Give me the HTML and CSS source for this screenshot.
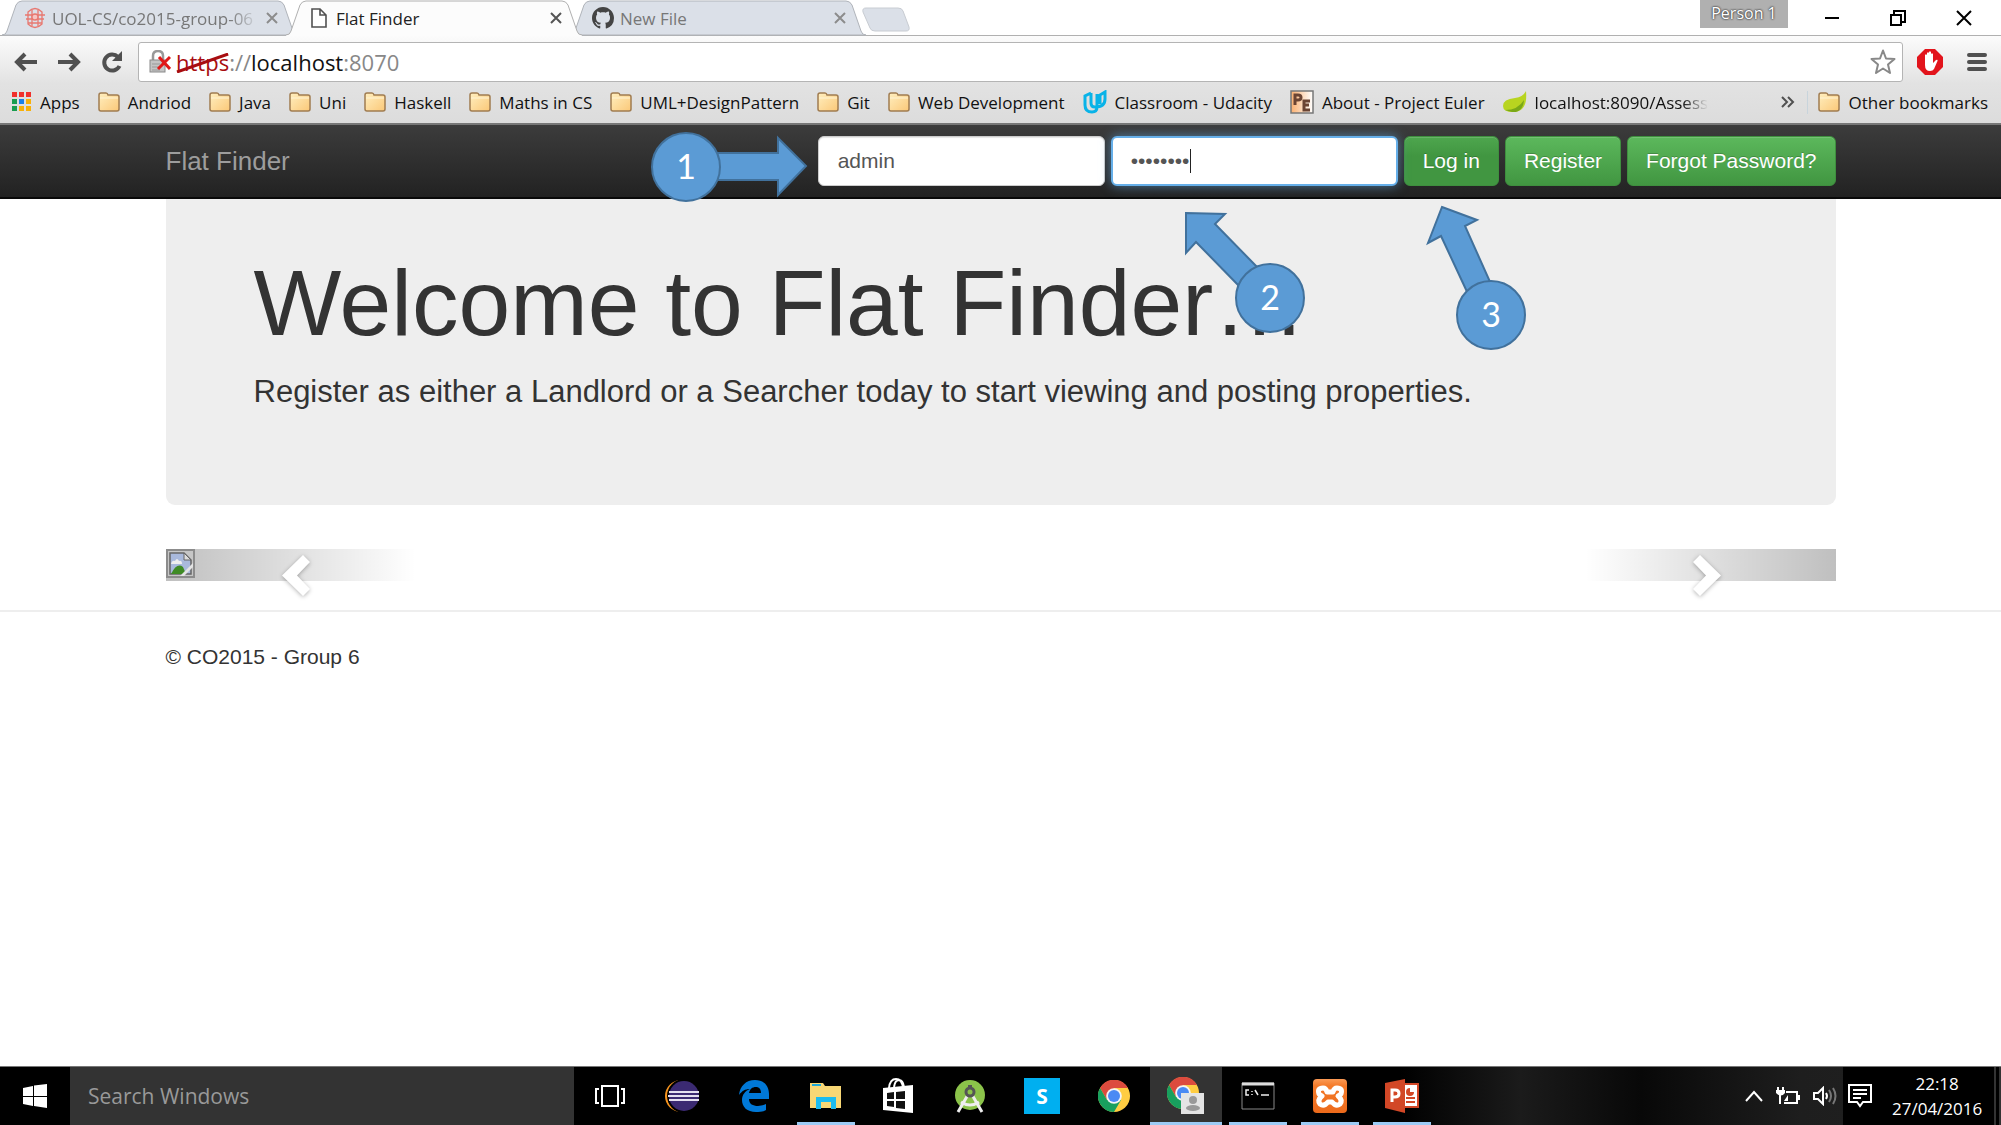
FILE: index.html
```html
<!DOCTYPE html>
<html lang="en">
<head>
<meta charset="utf-8">
<title>Flat Finder</title>
<link rel="stylesheet" href="styles.css">
</head>
<body>
<svg class="defs" aria-hidden="true">
  <defs>
    <linearGradient id="folder-fill" x1="0" y1="0" x2="1" y2="1"><stop offset="0" stop-color="#ffefc0"/><stop offset="1" stop-color="#fbc878"/></linearGradient>
    <linearGradient id="pe-fill" x1="0" y1="0" x2="1" y2="0"><stop offset="0" stop-color="#fbb070"/><stop offset="1" stop-color="#fff"/></linearGradient>
    <linearGradient id="xampp-fill" x1="0" y1="0" x2="0" y2="1"><stop offset="0" stop-color="#fb9a55"/><stop offset=".2" stop-color="#f47b2a"/><stop offset="1" stop-color="#ec6a1b"/></linearGradient>
    <symbol id="folder" viewBox="0 0 22 20"><path d="M1 5V3q0-2 2-2h5q1.500 0 2 2h9q2 0 2 2v12q0 2-2 2H3q-2 0-2-2z" fill="url(#folder-fill)" stroke="#a07c50" stroke-width="1.500"/><path d="M2 6h18" stroke="#fff4d4"/></symbol>
    <symbol id="chrome-logo" viewBox="0 0 32 32"><circle cx="16" cy="16" r="16" fill="#ffcd42"/><path d="M2.100 8A16 16 0 0 1 30 8H16l-7 12z" fill="#dc4b3e"/><path d="M2.100 8A16 16 0 0 0 16 32l7-12-14 0z" fill="#18a05e"/><circle cx="16" cy="16" r="7.800" fill="#f4f4f4"/><circle cx="16" cy="16" r="6" fill="#4a8af4"/></symbol>
    <symbol id="tab-close" viewBox="0 0 12 12"><path d="M1 1l10 10M11 1L1 11" stroke="currentColor" stroke-width="2" fill="none"/></symbol>
  </defs>
</svg>

<header class="browser">
  <div class="tabstrip">
    <div class="tab">
      <svg class="tab-shape" viewBox="0 0 296 36"><path d="M0 35Q4 35 5 31L14 5q2-4 6-4h256q4 0 6 4l9 26q1 4 5 4z" fill="#dbe0e8" stroke="#b0b4ba"/></svg>
      <svg class="favicon" viewBox="0 0 20 22"><g fill="none" stroke="#e87870" stroke-width="1.300"><path d="M3 5q7-7 14 0v12q-7 7-14 0z"/><path d="M0 8h20M1 12h18M3 16h14M7 3v16M13 3v16"/><circle cx="10" cy="10" r="3" fill="#f6c5c3"/></g></svg>
      <span class="tab-title fade">UOL-CS/co2015-group-06</span>
      <button class="tab-x" aria-label="Close tab"><svg width="12" height="12"><use href="#tab-close"/></svg></button>
    </div>
    <div class="tab active">
      <svg class="tab-shape" viewBox="0 0 296 36"><path d="M0 36v-1Q4 35 5 31L14 5q2-4 6-4h256q4 0 6 4l9 26q1 4 5 4v1z" fill="#fcfcfc"/><path d="M0 35Q4 35 5 31L14 5q2-4 6-4h256q4 0 6 4l9 26q1 4 5 4" fill="none" stroke="#b0b0b0"/></svg>
      <svg class="favicon" viewBox="0 0 20 22"><path d="M3 2h8l6 6v12H3zM11 2v6h6" fill="#fff" stroke="#505050" stroke-width="1.600"/></svg>
      <span class="tab-title">Flat Finder</span>
      <button class="tab-x" aria-label="Close tab"><svg width="12" height="12"><use href="#tab-close"/></svg></button>
    </div>
    <div class="tab">
      <svg class="tab-shape" viewBox="0 0 296 36"><path d="M0 35Q4 35 5 31L14 5q2-4 6-4h256q4 0 6 4l9 26q1 4 5 4z" fill="#dbe0e8" stroke="#b0b4ba"/></svg>
      <svg class="favicon" viewBox="0 0 16 16"><path fill="#444" d="M8 0C3.580 0 0 3.580 0 8c0 3.540 2.290 6.530 5.470 7.590.4.070.55-.17.55-.38 0-.19-.01-.82-.01-1.490-2.010.37-2.530-.49-2.690-.94-.09-.23-.48-.94-.82-1.130-.28-.15-.68-.52-.01-.53.63-.01 1.080.58 1.230.82.72 1.210 1.870.87 2.330.66.070-.52.28-.87.51-1.070-1.780-.2-3.640-.89-3.640-3.950 0-.87.31-1.590.82-2.150-.08-.2-.36-1.020.08-2.120 0 0 .67-.21 2.200.82.64-.18 1.320-.27 2-.27s1.360.09 2 .27c1.530-1.040 2.200-.82 2.200-.82.44 1.100.16 1.920.08 2.120.51.56.82 1.270.82 2.150 0 3.070-1.870 3.750-3.650 3.950.29.25.54.73.54 1.480 0 1.070-.01 1.930-.01 2.200 0 .21.15.46.55.38A8.010 8.010 0 0 0 16 8c0-4.420-3.580-8-8-8z"/></svg>
      <span class="tab-title">New File</span>
      <button class="tab-x" aria-label="Close tab"><svg width="12" height="12"><use href="#tab-close"/></svg></button>
    </div>
    <button class="new-tab" aria-label="New tab"><svg width="48" height="26" viewBox="0 0 48 26"><path d="M1 5q-1-4 3-4h32q4 0 5 3l6 16q1 4-3 4H13q-4 0-5-3z" fill="#dbe0e8" stroke="#c8ccd2"/></svg></button>
    <div class="window-controls">
      <span class="person">Person 1</span>
      <button aria-label="Minimise"><svg width="16" height="16"><path d="M1 8h14" stroke="#000" stroke-width="2"/></svg></button>
      <button aria-label="Restore"><svg width="16" height="16"><path d="M1 5h10v10H1zM4 5V1h11v11h-4" fill="none" stroke="#000" stroke-width="2"/></svg></button>
      <button aria-label="Close"><svg width="16" height="16"><path d="M1 1l14 14M15 1L1 15" stroke="#000" stroke-width="2"/></svg></button>
    </div>
  </div>

  <div class="toolbar">
    <button aria-label="Back"><svg width="24" height="20"><path d="M23 10H4M11 2l-8 8 8 8" fill="none" stroke="#505050" stroke-width="4"/></svg></button>
    <button aria-label="Forward"><svg width="24" height="20"><path d="M1 10h19M13 2l8 8-8 8" fill="none" stroke="#505050" stroke-width="4"/></svg></button>
    <button aria-label="Reload"><svg width="24" height="24"><path d="M18 7a8 8 0 1 0 1.500 9" fill="none" stroke="#505050" stroke-width="4"/><path d="M22 1v10H12z" fill="#505050"/></svg></button>
    <div class="omnibox">
      <svg width="22" height="24" viewBox="0 0 22 24"><path d="M4 12V6q0-5 5-5t5 5v6" fill="none" stroke="#999" stroke-width="2.500"/><rect x="1" y="10" width="15" height="12" fill="#c4c4c4" stroke="#8a8a8a"/><path d="M3 14h8M3 17h8M3 20h8" stroke="#999"/><path d="M10 7l11 12M21 7L9 19" stroke="#e01818" stroke-width="3"/></svg>
      <span class="url"><span class="scheme">https<svg class="strike" viewBox="0 0 54 20" preserveAspectRatio="none"><path d="M1 19L53 1" stroke="#a80d10" stroke-width="3"/></svg></span>://<b>localhost</b>:8070</span>
      <button class="star" aria-label="Bookmark this page"><svg width="26" height="26" viewBox="0 0 26 26"><path d="M13 1.500l3 8 8.500.5-6.500 5.500 2 8.500-7-4.500L6 24l2-8.500L1.500 10l8.500-.5z" fill="#fff" stroke="#888" stroke-width="2" stroke-linejoin="round"/></svg></button>
    </div>
    <button class="adblock" aria-label="AdBlock"><svg width="26" height="26" viewBox="0 0 26 26"><path d="M8 0h10l8 8v10l-8 8H8l-8-8V8z" fill="#e2141c"/><path d="M8 12V6q1-1.500 2 0v5V4q1-1.500 2 0v7V3q1-1.500 2 0v8V5q1-1.500 2 0v9l3-3q2-1 1.500 1L17 20q-1 2-4 2-5 0-5-6z" fill="#fff"/></svg></button>
    <button class="menu" aria-label="Menu"><svg width="20" height="20"><path d="M2 3h16M2 10h16M2 17h16" stroke="#505050" stroke-width="4" stroke-linecap="round"/></svg></button>
  </div>

  <nav class="bookmarks" aria-label="Bookmarks">
    <a href="#"><svg width="20" height="20"><path fill="#f0302c" d="M0 0h5v5H0zM7 0h5v5H7zM14 0h5v5h-5z"/><path fill="#189c50" d="M0 7h5v5H0zM0 14h5v5H0z"/><path fill="#1a80e8" d="M7 7h5v5H7z"/><path fill="#f8b008" d="M14 7h5v5h-5zM7 14h5v5H7zM14 14h5v5h-5z"/></svg>Apps</a>
    <a href="#"><svg width="22" height="20"><use href="#folder"/></svg>Andriod</a>
    <a href="#"><svg width="22" height="20"><use href="#folder"/></svg>Java</a>
    <a href="#"><svg width="22" height="20"><use href="#folder"/></svg>Uni</a>
    <a href="#"><svg width="22" height="20"><use href="#folder"/></svg>Haskell</a>
    <a href="#"><svg width="22" height="20"><use href="#folder"/></svg>Maths in CS</a>
    <a href="#"><svg width="22" height="20"><use href="#folder"/></svg>UML+DesignPattern</a>
    <a href="#"><svg width="22" height="20"><use href="#folder"/></svg>Git</a>
    <a href="#"><svg width="22" height="20"><use href="#folder"/></svg>Web Development</a>
    <a href="#"><svg width="24" height="24"><path d="M8 3L2 6v9q0 7 7 7 5 0 5-5V4M8 3v10q0 4 4 4 10 0 10-8V2l-5 3v9" fill="none" stroke="#09b3e8" stroke-width="3"/></svg>Classroom - Udacity</a>
    <a href="#"><svg width="24" height="24" viewBox="0 0 24 24"><rect x="1" y="1" width="22" height="22" fill="url(#pe-fill)" stroke="#777" stroke-width="1.500"/><path d="M5 15V5h3q3 0 3 2.500T8 10H5M20 11h-6v9h6M14 15h5" fill="none" stroke="#6b4433" stroke-width="3"/></svg>About - Project Euler</a>
    <a href="#"><svg width="24" height="24"><path d="M23 1q2 21-13 21-10 0-10-6 0-7 12-8 8-1 11-7z" fill="#b8d420"/><path d="M2 20q13 0 19-10-1 13-12 12z" fill="#7aa818"/></svg><span class="fade">localhost:8090/Assess</span></a>
    <button class="more" aria-label="More bookmarks"><svg width="14" height="12"><path d="M1 1l5 5-5 5M7 1l5 5-5 5" fill="none" stroke="#505050" stroke-width="2"/></svg></button>
    <a class="other" href="#"><svg width="22" height="20"><use href="#folder"/></svg>Other bookmarks</a>
  </nav>
</header>

<main class="page">
  <div class="navbar">
    <div class="container navbar-row">
      <a class="brand" href="#">Flat Finder</a>
      <form class="login">
        <input type="text" aria-label="Username" value="admin">
        <span class="password"><input class="focused" type="password" aria-label="Password" value="password"><i class="caret"></i></span>
        <button class="btn hover" type="button">Log in</button>
        <button class="btn" type="button">Register</button>
        <button class="btn" type="button">Forgot Password?</button>
      </form>
      <svg class="callouts" width="1200" height="240" viewBox="636 125 1200 240">
        <g fill="#5b9bd5" stroke="#41719c" stroke-width="2">
          <path d="M700 153h78v-15l28 28-28 29v-15h-78z"/>
          <path d="M1186 213l39 1-10 10 46 47-19 18-46-47-10 11z"/>
          <path d="M1442 207l35 13-12 6 26 58-22 12-28-60-13 7z"/>
          <circle cx="686" cy="167" r="34"/><circle cx="1270" cy="298" r="34"/><circle cx="1491" cy="315" r="34"/>
        </g>
        <g class="callout-text"><text x="686" y="179">1</text><text x="1270" y="310">2</text><text x="1491" y="327">3</text></g>
      </svg>
    </div>
  </div>
  <div class="container">
    <section class="jumbotron">
      <h1>Welcome to Flat Finder…</h1>
      <p>Register as either a Landlord or a Searcher today to start viewing and posting properties.</p>
    </section>
    <section class="carousel">
      <svg class="broken" width="29" height="29" viewBox="0 0 29 29"><path d="M1 1h27v27H1z" fill="#c6c6c6" stroke="#8c8c8c" stroke-width="2"/><path d="M4 4h14l7 7v14H4z" fill="#a9b9dc" stroke="#666" stroke-width="1.500"/><path d="M5 15q1-4 4-3 2-4 4 0 3-1 3 3z" fill="#eee"/><path d="M5 25q6-12 12-7l3 7z" fill="#3f8b25"/><path d="M18 4v7h7z" fill="#ddd" stroke="#666"/><path d="M14 27L27 14v4l-9 9z" fill="#e4e4e4"/></svg>
      <a class="control prev" href="#" aria-label="Previous"><svg width="30" height="44"><path d="M22 1l7 7-13 13.500L29 35l-7 7L1 21.500z" fill="#fff"/></svg></a>
      <a class="control next" href="#" aria-label="Next"><svg width="30" height="44"><path d="M8 1L1 8l13 13.500L1 35l7 7 21-20.500z" fill="#fff"/></svg></a>
    </section>
  </div>
  <footer><div class="container">© CO2015 - Group 6</div></footer>
</main>

<div class="taskbar">
  <button class="start" aria-label="Start"><svg width="24" height="24"><path d="M0 4l10-2v10H0zM11 1.500L24 0v12H11zM0 13h10v9L0 20zM11 13h13v11l-13-2z" fill="#fff"/></svg></button>
  <input class="search" type="text" placeholder="Search Windows" aria-label="Search Windows">
  <div class="apps">
    <button aria-label="Task view"><svg width="30" height="22"><path d="M7 1h16v20H7zM4 4H1v14h3M26 4h3v14h-3" fill="none" stroke="#fff" stroke-width="2"/></svg></button>
    <button aria-label="Eclipse"><svg width="36" height="34" viewBox="0 0 36 34"><circle cx="17" cy="17" r="16" fill="#f7941e"/><circle cx="20" cy="17" r="17" fill="#000"/><circle cx="20" cy="17" r="15" fill="#3b2a72"/><path d="M5 13h30M4 17h31M5 21h30" stroke="#e4e0f0" stroke-width="2"/></svg></button>
    <button aria-label="Edge"><svg width="30" height="32" viewBox="0 0 30 32"><path d="M0 15C1 6 7 0 16 0c9 0 14 6 14 14v5H10c0 5 4 7 9 7 3 0 6-1 8-2v6c-3 2-6 2-10 2C8 32 3 27 3 20c0-5 3-9 8-11-5 0-8 2-11 6zm10-2h12c0-4-2-6-5-6-4 0-6 2-7 6z" fill="#0078d7"/></svg></button>
    <button class="running" aria-label="File Explorer"><svg width="32" height="28"><path d="M0 1h13l2 3h16v22H0z" fill="#f8d775"/><path d="M2 3h9" stroke="#20a8d8" stroke-width="2"/><path d="M6 15h20v12h-5v-7h-10v7H6z" fill="#1cbcf0"/></svg></button>
    <button aria-label="Store"><svg width="32" height="36"><path d="M7 10q1-9 7-9t7 9M12 9q1-7 5-7t5 7" fill="none" stroke="#fff" stroke-width="2"/><path d="M1 10l30-3v28L1 32z" fill="#fff"/><path d="M5 15l7-1v7H5zM14 14l9-1v8h-9zM5 23h7v6l-7-1zM14 23h9v8l-9-1z" fill="#111"/></svg></button>
    <button aria-label="Android Studio"><svg width="32" height="34"><circle cx="16" cy="16" r="15" fill="#8bc34a"/><path d="M15 14L4 33M17 14l11 19M7 23q9 6 18 0" fill="none" stroke="#eee" stroke-width="3"/><path d="M16 6v6" stroke="#555" stroke-width="4"/><circle cx="16" cy="13" r="4" fill="#8bc34a" stroke="#555" stroke-width="3"/></svg></button>
    <button aria-label="Skype"><span class="skype">S</span></button>
    <button aria-label="Chrome"><svg width="32" height="32"><use href="#chrome-logo"/></svg></button>
    <button class="running current" aria-label="Chrome, Person 1"><svg width="38" height="38"><svg width="32" height="32"><use href="#chrome-logo"/></svg><path d="M14 16h23v21H14z" fill="#e4e4e4"/><circle cx="26" cy="23" r="4" fill="#999"/><ellipse cx="26" cy="31" rx="7" ry="3" fill="#999"/></svg></button>
    <button class="running" aria-label="Command Prompt"><svg width="34" height="28"><path d="M1 1h32v26H1z" fill="#000" stroke="#888"/><path d="M1 2h32" stroke="#ddd" stroke-width="3"/><path d="M8 8H5v5h3M11 9v1M11 12v1M14 8l3 5M20 13h8" fill="none" stroke="#eee" stroke-width="1.500"/></svg></button>
    <button class="running" aria-label="XAMPP"><svg width="36" height="36"><rect x="1" y="1" width="34" height="34" rx="4" fill="url(#xampp-fill)"/><path d="M11 10q-6 0-4 6l3 2q-5 4-2 8 4 3 8-2h4q4 5 8 2 3-4-2-8l3-2q2-6-4-6-3 0-4 4h-6q-1-4-4-4z" fill="none" stroke="#fff" stroke-width="5" stroke-linejoin="round"/></svg></button>
    <button class="running" aria-label="PowerPoint"><svg width="34" height="34"><path d="M18 5h15v23H18z" fill="#fff" stroke="#d24726" stroke-width="2"/><path d="M21 19h9M21 23h9" stroke="#d24726" stroke-width="2"/><path d="M25 9a4 4 0 1 0 4 4h-4z" fill="#d24726"/><path d="M0 4l20-4v34L0 29z" fill="#d24726"/><path d="M7 23V11h3q4 0 4 3.500T10 18H7" fill="none" stroke="#fff" stroke-width="3"/></svg></button>
  </div>
  <div class="tray">
    <svg width="18" height="12"><path d="M1 11l8-9 8 9" fill="none" stroke="#fff" stroke-width="2"/></svg>
    <svg width="24" height="18"><path d="M10 5h11v11H8M23 8v5" fill="none" stroke="#fff" stroke-width="2"/><path d="M2 0v4M7 0v4M4 8v9" stroke="#fff" stroke-width="2"/><path d="M0 3h9v3q-4 5-9 0zM8 14l4-6v6z" fill="#fff"/></svg>
    <svg width="24" height="20"><path d="M1 7h4l5-5v16l-5-5H1z" fill="none" stroke="#fff" stroke-width="2"/><path d="M13 7q2 3 0 6" fill="none" stroke="#fff" stroke-width="2"/><path d="M16 4q4 6 0 12M20 2q5 8 0 16" fill="none" stroke="#777" stroke-width="2"/></svg>
  </div>
  <div class="clock-area">
    <svg width="24" height="24"><path d="M1 1h22v17h-8l-3 4-3-4H1zM5 6h14M5 10h14M5 14h8" fill="none" stroke="#fff" stroke-width="2"/></svg>
    <div class="clock"><span>22:18</span><span>27/04/2016</span></div>
  </div>
</div>
</body>
</html>
```
FILE: styles.css
```css
* { box-sizing: border-box; }

html, body { height: 100%; margin: 0; }

body {
  display: flex;
  flex-direction: column;
  background: #fff;
  font-family: "Liberation Sans", Arial, sans-serif;
  font-size: 21px;
  color: #333;
}

button { font: inherit; padding: 0; border: 0; background: none; }
a { color: inherit; text-decoration: none; }
svg { display: block; flex: none; }
.defs { position: absolute; width: 0; height: 0; }

/* Browser frame */
.browser {
  background: linear-gradient(#fcfcfc 35px, #e2e2e2 84px, #dcdcdc);
  border-bottom: 2px solid #777;
  font-family: "Open Sans", "Noto Sans", sans-serif;
  font-size: 17px;
  color: #111;
}

.tabstrip {
  display: flex;
  height: 36px;
  padding-left: 2px;
  background: #fff;
  border-bottom: 1px solid #b0b0b0;
}

.tab {
  position: relative;
  isolation: isolate;
  display: flex;
  align-items: center;
  gap: 6px;
  width: 296px;
  height: 36px;
  margin-right: -12px;
  padding: 0 20px 0 22px;
  color: #777;
}
.tab.active { z-index: 1; color: #222; }
.tab-shape { position: absolute; left: 0; top: 0; width: 296px; height: 36px; z-index: -1; }
.favicon { width: 22px; height: 22px; }
.tab-title { flex: 1; min-width: 0; overflow: hidden; white-space: nowrap; }
.fade {
  -webkit-mask-image: linear-gradient(to right, #000 85%, transparent);
  mask-image: linear-gradient(to right, #000 85%, transparent);
}
.tab-x { color: #8c8c8c; }
.active .tab-x { color: #555; }
.new-tab { align-self: flex-start; margin: 7px 0 0 8px; }

.window-controls { display: flex; align-items: flex-start; gap: 50px; margin-left: auto; padding-right: 29px; }
.window-controls button { margin-top: 10px; }
.person {
  width: 88px;
  height: 28px;
  margin-right: -14px;
  background: #b0b0b0;
  color: #fff;
  font-size: 16px;
  line-height: 26px;
  text-align: center;
  text-shadow: 0 0 2px #333, 0 0 2px #333;
}

.toolbar { display: flex; align-items: center; height: 52px; padding: 0 14px; }
.toolbar > button { margin-right: 19px; }
.toolbar > .adblock { margin: 0 0 0 14px; }
.toolbar > .menu { margin: 0 0 0 24px; }
.omnibox {
  display: flex;
  align-items: center;
  flex: 1;
  height: 40px;
  margin-left: -5px;
  padding: 0 6px 0 10px;
  background: #fff;
  border: 1px solid #b4b4b4;
  border-radius: 3px;
}
.url { margin-left: 5px; color: #888; font-size: 22px; }
.url b { color: #111; font-weight: 400; }
.scheme { position: relative; color: #a80d10; }
.strike { position: absolute; left: 0; top: 6px; width: 100%; height: 20px; }
.star { margin-left: auto; }

.bookmarks { display: flex; align-items: center; gap: 18px; height: 35px; padding: 0 13px 7px 12px; white-space: nowrap; }
.bookmarks a { display: flex; align-items: center; gap: 8px; }
.bookmarks .more { margin-left: auto; }
.bookmarks .other { margin-left: -6px; padding-left: 10px; border-left: 1px solid #c8d4dc; }

/* Site */
.page { flex: 1; min-height: 0; }
.container { max-width: 1670px; margin: 0 auto; }

.navbar { background: linear-gradient(#3c3c3c, #222); border-bottom: 2px solid #090909; }
.navbar-row { position: relative; display: flex; align-items: center; justify-content: space-between; height: 72px; }
.brand { color: #9d9d9d; font-size: 26px; }
.login { display: flex; gap: 6px; }
.login input {
  width: 287px;
  height: 50px;
  padding: 0 19px;
  border: 1px solid #ccc;
  border-radius: 6px;
  background: #fff;
  color: #555;
  font: inherit;
  outline: 0;
  box-shadow: inset 0 1px 1px rgba(0, 0, 0, .1);
}
.login .focused { border: 2px solid #66afe9; padding: 0 18px; box-shadow: 0 0 12px rgba(102, 175, 233, .6); }
.password { position: relative; }
.caret { position: absolute; left: 79px; top: 13px; width: 1px; height: 24px; background: #222; }
.btn {
  height: 50px;
  padding: 0 18px;
  border: 1px solid #3e8f3e;
  border-radius: 6px;
  background: linear-gradient(#5cb85c, #419641);
  color: #fff;
  text-shadow: 0 -1px 0 rgba(0, 0, 0, .2);
  box-shadow: inset 0 1px 0 rgba(255, 255, 255, .15);
}
.btn.hover { background: linear-gradient(#4ea64e, #419641 40%); }

.callouts { position: absolute; right: 0; top: 0; z-index: 2; pointer-events: none; }
.callout-text { fill: #fff; font-family: Lato, sans-serif; font-size: 34px; text-anchor: middle; }

.jumbotron { height: 306px; padding: 53px 88px; background: #eee; border-radius: 0 0 9px 9px; }
.jumbotron h1 { margin: 0 0 16px; font-size: 93px; font-weight: 400; line-height: 102px; }
.jumbotron p { margin: 0; font-size: 31px; line-height: 44px; }

.carousel { position: relative; height: 32px; margin: 44px 0 29px; }
.broken { position: relative; z-index: 1; }
.control { position: absolute; top: 0; bottom: 0; width: 15%; }
.prev { left: 0; background: linear-gradient(to right, rgba(0, 0, 0, .25), transparent); }
.next { right: 0; background: linear-gradient(to left, rgba(0, 0, 0, .25), transparent); }
.control svg { position: absolute; top: 5px; filter: drop-shadow(0 1px 2px rgba(0, 0, 0, .3)); }
.prev svg { left: 115px; }
.next svg { right: 114px; }

footer { border-top: 2px solid #eee; padding-top: 30px; line-height: 29px; }

/* Desktop taskbar */
.taskbar {
  display: flex;
  height: 59px;
  border-top: 1px solid #777;
  background: linear-gradient(to right, #000 70%, #1b1b1b 76%, #080808 82%, #1e1e1e 90%, #222);
  color: #fff;
  font-family: "Open Sans", "Noto Sans", sans-serif;
}
.start { display: grid; place-items: center; width: 70px; background: #000; }
.search { width: 504px; padding: 0 18px; border: 0; background: #333; color: #fff; font: inherit; }
.search::placeholder { color: #999; opacity: 1; }
.apps { display: flex; }
.apps button { display: grid; place-items: center; position: relative; width: 72px; }
.apps .running::after { content: ""; position: absolute; left: 7px; right: 7px; bottom: 0; height: 3px; background: #9ccbf5; }
.apps .current { background: #333; }
.apps .current::after { left: 0; right: 0; }
.skype {
  display: grid;
  place-items: center;
  width: 36px;
  height: 36px;
  background: #00aff0;
  font-weight: 700;
  color: #fff;
}
.tray { display: flex; align-items: center; gap: 13px; margin-left: auto; padding-right: 6px; }
.clock-area { display: flex; align-items: center; gap: 20px; width: 158px; padding-left: 5px; background: #000; border-right: 7px double #333; }
.clock { display: flex; flex-direction: column; align-items: center; font-size: 17px; line-height: 25px; }
```
